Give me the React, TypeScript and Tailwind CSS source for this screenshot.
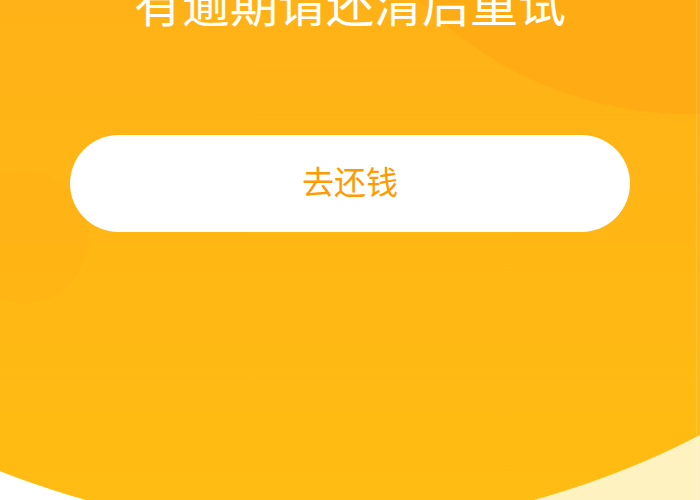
import React from 'react';

function Backdrop() {
  // decorative shapes behind the page: header blob, circles, cream corner
  return (
    <svg className="absolute inset-0 w-full h-full" viewBox="0 0 700 500" preserveAspectRatio="none">
      <defs>
        <linearGradient id="head" x1="0" y1="0" x2="0" y2="500" gradientUnits="userSpaceOnUse">
          <stop offset="0" stopColor="#ffb217" />
          <stop offset="1" stopColor="#ffbc12" />
        </linearGradient>
      </defs>
      <circle cx="750" cy="700" r="400" fill="#fef2c0" />
      <ellipse cx="310" cy="-260" rx="820" ry="790" fill="url(#head)" />
      <circle cx="690" cy="-266" r="380" fill="#ffa913" fillOpacity="0.8" />
      <circle cx="22" cy="237" r="66" fill="#ffae14" fillOpacity="0.35" />
    </svg>
  );
}

export default function App() {
  return (
    <div className="relative w-full h-[500px] overflow-hidden bg-white" style={{ fontFamily: '"Noto Sans CJK SC", "Noto Sans", sans-serif' }}>
      <Backdrop />
      <div className="absolute top-0 bottom-0 right-[3px] w-px bg-white/15" />

      <div className="relative flex flex-col items-center">
        <h1 className="-mt-[23px] text-[48px] leading-[48px] font-normal text-white">有逾期请还清后重试</h1>

        <button
          type="button"
          className="mt-[110px] w-[560px] h-[97px] pb-[8px] rounded-full bg-white text-[32px] leading-none text-[#ff9a00]"
        >
          去还钱
        </button>
      </div>
    </div>
  );
}
